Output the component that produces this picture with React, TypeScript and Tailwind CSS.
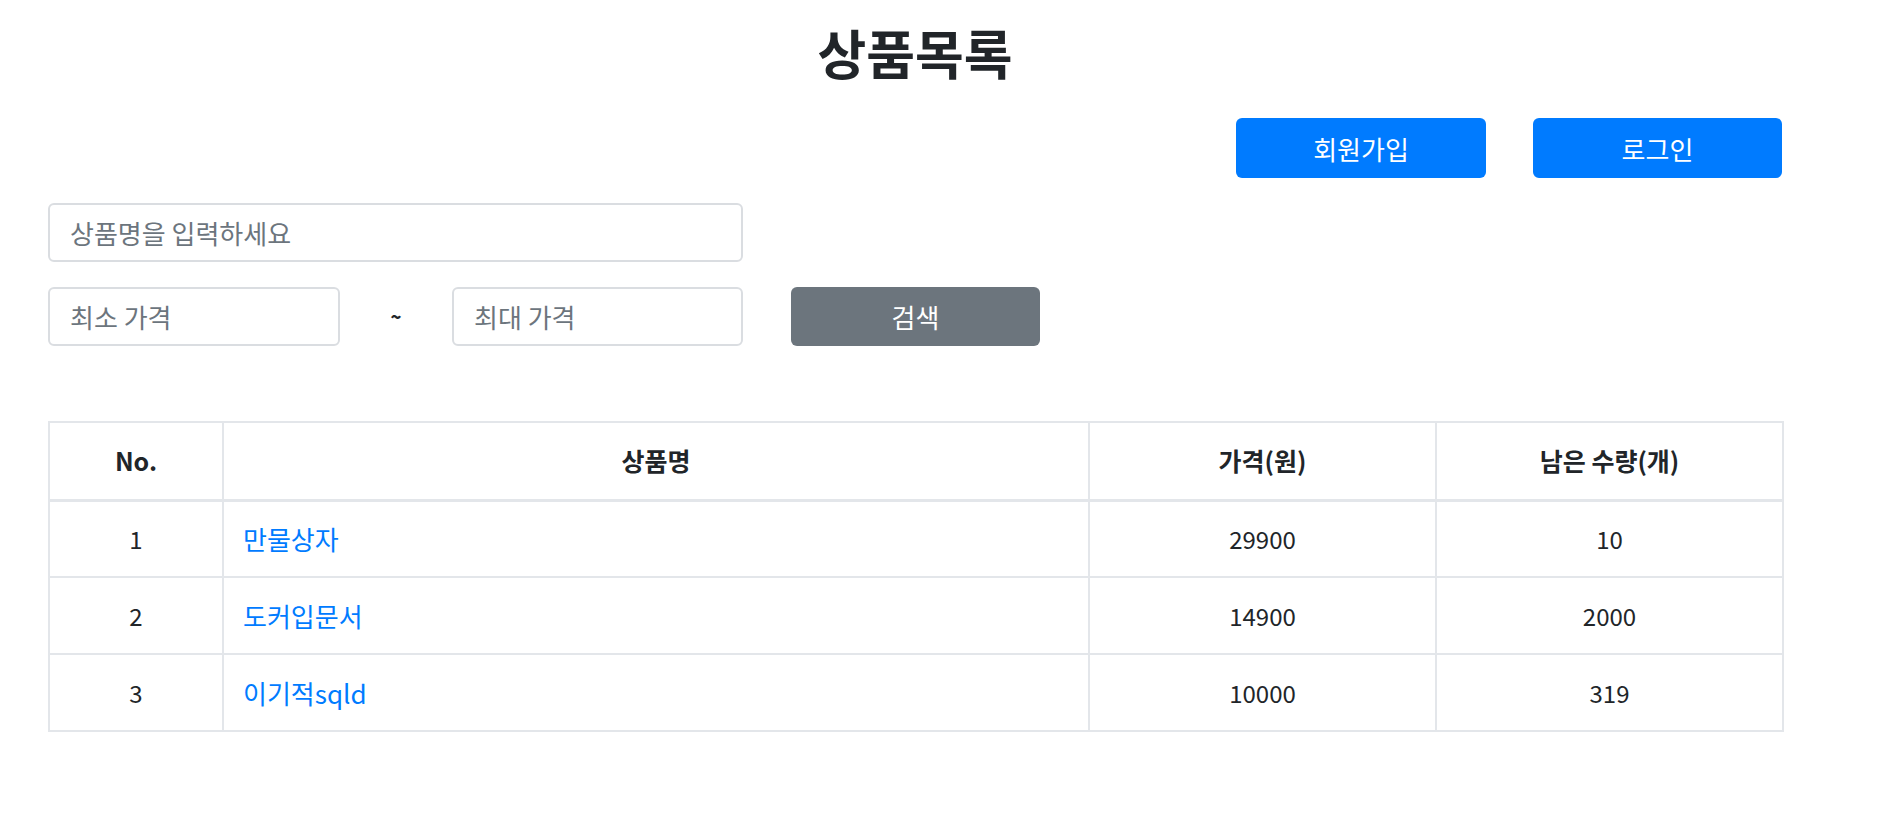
const products = [
  { no: 1, name: "만물상자", price: 29900, stock: 10 },
  { no: 2, name: "도커입문서", price: 14900, stock: 2000 },
  { no: 3, name: "이기적sqld", price: 10000, stock: 319 },
];

const font = "font-['Malgun_Gothic','Noto_Sans_CJK_KR',sans-serif]";

export default function App() {
  return (
    <div className={`min-h-screen bg-white text-[#212529] ${font}`}>
      <div className="ml-[48px] w-[1734px] pt-[14px]">
        <h1 className="text-center text-[53px] font-bold leading-[76px]">
          상품목록
        </h1>

        <div className="mt-[28px] flex justify-end gap-[47px]">
          <button className="h-[60px] w-[250px] rounded-[6px] bg-[#007bff] text-[26px] text-white">
            회원가입
          </button>
          <button className="h-[60px] w-[249px] rounded-[6px] bg-[#007bff] text-[26px] text-white">
            로그인
          </button>
        </div>

        <div className="mt-[25px] flex flex-col gap-[25px]">
          <input
            className="h-[59px] w-[695px] rounded-[6px] border-2 border-[#dadde1] px-[20px] text-[26px] outline-none placeholder:text-[#6c757d]"
            placeholder="상품명을 입력하세요"
          />
          <div className="flex items-center">
            <input
              className="h-[59px] w-[292px] rounded-[6px] border-2 border-[#dadde1] px-[20px] text-[26px] outline-none placeholder:text-[#6c757d]"
              placeholder="최소 가격"
            />
            <span className="w-[112px] text-center text-[18px] font-extrabold">~</span>
            <input
              className="h-[59px] w-[291px] rounded-[6px] border-2 border-[#dadde1] px-[20px] text-[26px] outline-none placeholder:text-[#6c757d]"
              placeholder="최대 가격"
            />
            <button className="ml-[48px] h-[59px] w-[249px] rounded-[6px] bg-[#6c757d] text-[26px] text-white">
              검색
            </button>
          </div>
        </div>

        <table className="mt-[75px] w-[1734px] table-fixed border-collapse text-[24px]">
          <colgroup>
            <col className="w-[174px]" />
            <col className="w-[866px]" />
            <col className="w-[347px]" />
            <col className="w-[347px]" />
          </colgroup>
          <thead>
            <tr className="h-[78px] text-[25px]">
              <th className="border-2 border-b-[3px] border-[#e3e6ea] font-bold">No.</th>
              <th className="border-2 border-b-[3px] border-[#e3e6ea] font-bold">상품명</th>
              <th className="border-2 border-b-[3px] border-[#e3e6ea] font-bold">가격(원)</th>
              <th className="border-2 border-b-[3px] border-[#e3e6ea] font-bold">남은 수량(개)</th>
            </tr>
          </thead>
          <tbody>
            {products.map((p) => (
              <tr key={p.no} className="h-[77px]">
                <td className="border-2 border-[#e3e6ea] text-center">{p.no}</td>
                <td className="border-2 border-[#e3e6ea] px-[19px] text-[26px]">
                  <a href="#" className="text-[#007bff]">
                    {p.name}
                  </a>
                </td>
                <td className="border-2 border-[#e3e6ea] text-center">{p.price}</td>
                <td className="border-2 border-[#e3e6ea] text-center">{p.stock}</td>
              </tr>
            ))}
          </tbody>
        </table>
      </div>
    </div>
  );
}
